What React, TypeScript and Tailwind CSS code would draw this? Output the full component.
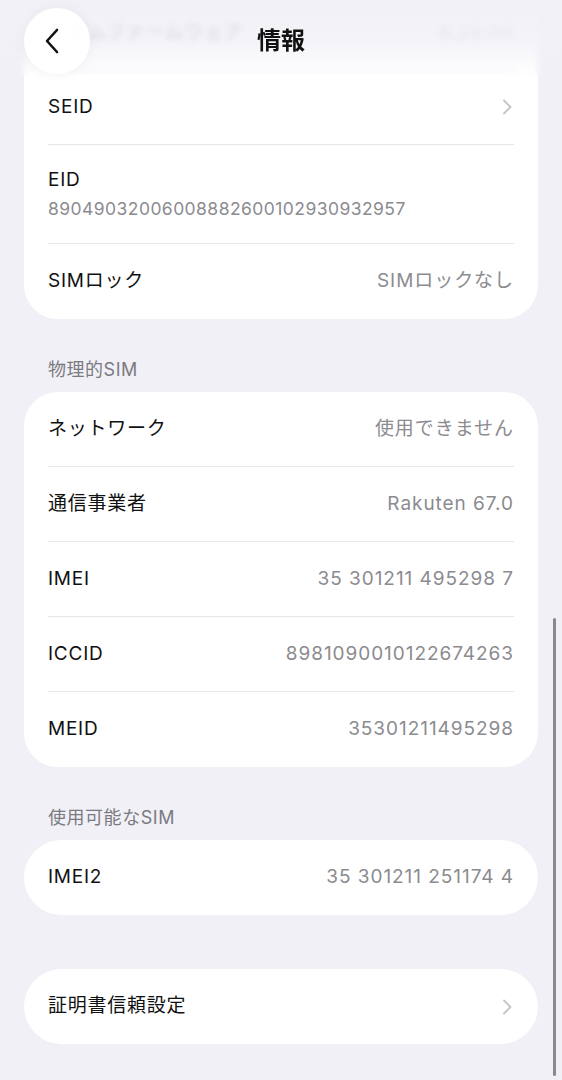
import React from 'react';

const font = { fontFamily: 'Inter, "Noto Sans CJK JP", sans-serif' };

type RowProps = {
  label: string;
  value?: string;
  chevron?: boolean;
  last?: boolean;
};

const Chevron = () => (
  <svg width="10" height="16" viewBox="0 0 10 16" fill="none" className="shrink-0 mr-[2px]">
    <path d="M2 1.5 8.5 8 2 14.5" stroke="#c4c4c8" strokeWidth="1.8" strokeLinecap="round" strokeLinejoin="round" />
  </svg>
);

const Row: React.FC<RowProps> = ({ label, value, chevron, last }) => (
  <div className="px-6">
    <div className={`h-[75px] flex items-center justify-between ${last ? '' : 'border-b border-[#e6e6eb]'}`}>
      <span className="text-[19px] tracking-[0.04em] text-[#111]">{label}</span>
      <div className="flex items-center gap-2">
        {value && <span className="text-[19px] tracking-[0.05em] text-[#8b8b90]">{value}</span>}
        {chevron && <Chevron />}
      </div>
    </div>
  </div>
);

const SectionTitle: React.FC<{ title: string }> = ({ title }) => (
  <div className="px-12 pt-[39px] pb-2 h-[73px] flex items-start">
    <span className="text-[18px] leading-[24px] tracking-[0.03em] text-[#7a7a80]">{title}</span>
  </div>
);

export default function App() {
  return (
    <div className="relative w-[562px] h-[1080px] overflow-hidden bg-[#f1f0f6]" style={font}>
      {/* scroll content */}
      <div className="-mt-[5px] flex flex-col">
        <div className="mx-6 bg-white rounded-[34px] overflow-hidden">
          <Row label="モデムファームウェア" value="6.20.03" />
          <Row label="SEID" chevron />
          <div className="px-6">
            <div className="h-[99px] flex flex-col justify-center border-b border-[#e6e6eb]">
              <span className="text-[19px] tracking-[0.04em] text-[#111] leading-[26px]">EID</span>
              <span className="text-[17.5px] tracking-[0.025em] text-[#8b8b90] leading-[26px] mt-[3px]">89049032006008882600102930932957</span>
            </div>
          </div>
          <Row label="SIMロック" value="SIMロックなし" last />
        </div>

        <SectionTitle title="物理的SIM" />
        <div className="mx-6 bg-white rounded-[34px] overflow-hidden">
          <Row label="ネットワーク" value="使用できません" />
          <Row label="通信事業者" value="Rakuten 67.0" />
          <Row label="IMEI" value="35 301211 495298 7" />
          <Row label="ICCID" value="8981090010122674263" />
          <Row label="MEID" value="35301211495298" last />
        </div>

        <SectionTitle title="使用可能なSIM" />
        <div className="mx-6 bg-white rounded-[38px] overflow-hidden">
          <Row label="IMEI2" value="35 301211 251174 4" last />
        </div>

        <div className="h-[54px]" />
        <div className="mx-6 bg-white rounded-[38px] overflow-hidden">
          <Row label="証明書信頼設定" chevron last />
        </div>
      </div>

      {/* blurred nav bar */}
      <div className="absolute top-0 inset-x-0 h-[76px] backdrop-blur-[3px] bg-linear-to-b from-[#f1f0f6] via-[#f1f0f6]/85 to-[#f1f0f6]/0">
        <div className="relative h-full flex items-center justify-center">
          <span className="text-[24px] font-bold text-[#111] mt-[6px]">情報</span>
        </div>
      </div>
      <button className="absolute left-6 top-2 w-[66px] h-[66px] rounded-full bg-white/95 shadow-[0_0_14px_rgba(0,0,0,0.05)] flex items-center justify-center">
        <svg width="16" height="26" viewBox="0 0 16 26" fill="none" className="-ml-[11px]">
          <path d="M13 2 3 13l10 11" stroke="#111" strokeWidth="2.6" strokeLinecap="round" strokeLinejoin="round" />
        </svg>
      </button>

      {/* scroll indicator */}
      <div className="absolute right-[6px] top-[618px] w-[3px] h-[458px] rounded-full bg-[#8a8a8e]" />
    </div>
  );
}
